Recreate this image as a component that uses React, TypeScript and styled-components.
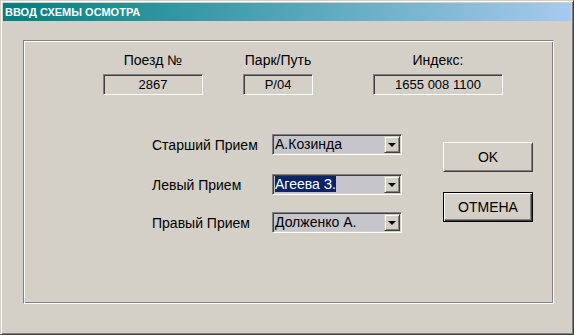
import styled, { createGlobalStyle } from "styled-components"

const GlobalStyle = createGlobalStyle`
  html, body {
    margin: 0;
    padding: 0;
    background: #d4d0c8;
  }
  body {
    font-family: "Liberation Sans", Arial, sans-serif;
    font-size: 14px;
    color: #000;
  }
`

const Window = styled.div`
  width: 574px;
  height: 335px;
  box-sizing: border-box;
  background: #d4d0c8;
  border: 1px solid;
  border-color: #d4d0c8 #404040 #404040 #d4d0c8;
  box-shadow: inset 1px 1px #fff, inset -1px -1px #808080;
  padding: 2px;
  display: flex;
  flex-direction: column;
`

const TitleBar = styled.div`
  height: 18px;
  flex: none;
  background: linear-gradient(to right, #008080, #a6caf0);
  color: #fff;
  font-weight: bold;
  font-size: 11px;
  line-height: 18px;
  padding-left: 2px;
  white-space: nowrap;
`

const Content = styled.div`
  flex: 1;
  padding: 19px 17px 28px 20px;
  display: flex;
`

const GroupBox = styled.div`
  flex: 1;
  border: 1px solid;
  border-color: #808080 #fff #fff #808080;
  box-shadow: inset 1px 1px #fff, inset -1px -1px #808080;
`

const TopRow = styled.div`
  display: flex;
  padding-top: 11px;
`

const Field = styled.div<{ $width: number; $ml: number }>`
  width: ${(p) => p.$width}px;
  margin-left: ${(p) => p.$ml}px;
  display: flex;
  flex-direction: column;
  align-items: center;
`

const FieldLabel = styled.div`
  line-height: 16px;
  white-space: nowrap;
`

const ReadBox = styled.div`
  margin-top: 6px;
  width: 100%;
  height: 21px;
  box-sizing: border-box;
  border: 1px solid;
  border-color: #808080 #fff #fff #808080;
  box-shadow: inset 1px 1px #404040, inset -1px -1px #d4d0c8;
  text-align: center;
  font-size: 13px;
  line-height: 19px;
`

const BottomArea = styled.div`
  display: flex;
  margin-top: 39px;
  padding-left: 128px;
`

const Form = styled.div`
  display: flex;
  flex-direction: column;
`

const FormRow = styled.div<{ $mt: number }>`
  display: flex;
  align-items: center;
  margin-top: ${(p) => p.$mt}px;
`

const RowLabel = styled.div`
  width: 120px;
  white-space: nowrap;
`

const Combo = styled.div`
  width: 130px;
  height: 21px;
  box-sizing: border-box;
  border: 1px solid;
  border-color: #808080 #fff #fff #808080;
  box-shadow: inset 1px 1px #404040, inset -1px -1px #d4d0c8;
  background: #c6c5cb;
  padding: 1px;
  display: flex;
`

const ComboText = styled.div`
  flex: 1;
  line-height: 17px;
  white-space: nowrap;
  overflow: hidden;
  padding-left: 1px;
`

const Selected = styled.span`
  background: #0a246a;
  color: #fff;
`

const DropButton = styled.div`
  width: 16px;
  height: 17px;
  box-sizing: border-box;
  background: #d4d0c8;
  border: 1px solid;
  border-color: #d4d0c8 #404040 #404040 #d4d0c8;
  box-shadow: inset 1px 1px #fff, inset -1px -1px #808080;
  display: flex;
  align-items: center;
  justify-content: center;
`

const Arrow = styled.div`
  width: 0;
  height: 0;
  border-left: 4px solid transparent;
  border-right: 4px solid transparent;
  border-top: 4px solid #000;
  margin-top: 1px;
`

const Buttons = styled.div`
  display: flex;
  flex-direction: column;
  margin-left: 41px;
  padding-top: 8px;
  gap: 20px;
`

const Button = styled.div<{ $default?: boolean }>`
  width: 90px;
  height: 30px;
  box-sizing: border-box;
  display: flex;
  align-items: center;
  justify-content: center;
  background: #d4d0c8;
  border: 1px solid;
  ${(p) =>
    p.$default
      ? `border-color: #000;
         box-shadow: inset 1px 1px #fff, inset -1px -1px #404040, inset -2px -2px #808080;`
      : `border-color: #fff #404040 #404040 #fff;
         box-shadow: inset 1px 1px #d4d0c8, inset -1px -1px #808080;`}
`

type ComboProps = { value: string; selected?: boolean }

function ComboBox({ value, selected }: ComboProps) {
  return (
    <Combo>
      <ComboText>{selected ? <Selected>{value}</Selected> : value}</ComboText>
      <DropButton>
        <Arrow />
      </DropButton>
    </Combo>
  )
}

export default function App() {
  return (
    <>
      <GlobalStyle />
      <Window>
        <TitleBar>ВВОД СХЕМЫ ОСМОТРА</TitleBar>
        <Content>
          <GroupBox>
            <TopRow>
              <Field $width={100} $ml={79}>
                <FieldLabel>Поезд №</FieldLabel>
                <ReadBox>2867</ReadBox>
              </Field>
              <Field $width={70} $ml={40}>
                <FieldLabel>Парк/Путь</FieldLabel>
                <ReadBox>P/04</ReadBox>
              </Field>
              <Field $width={130} $ml={60}>
                <FieldLabel>Индекс:</FieldLabel>
                <ReadBox>1655 008 1100</ReadBox>
              </Field>
            </TopRow>
            <BottomArea>
              <Form>
                <FormRow $mt={0}>
                  <RowLabel>Старший Прием</RowLabel>
                  <ComboBox value="А.Козинда" />
                </FormRow>
                <FormRow $mt={19}>
                  <RowLabel>Левый Прием</RowLabel>
                  <ComboBox value="Агеева З." selected />
                </FormRow>
                <FormRow $mt={17}>
                  <RowLabel>Правый Прием</RowLabel>
                  <ComboBox value="Долженко А." />
                </FormRow>
              </Form>
              <Buttons>
                <Button>OK</Button>
                <Button $default>ОТМЕНА</Button>
              </Buttons>
            </BottomArea>
          </GroupBox>
        </Content>
      </Window>
    </>
  )
}
